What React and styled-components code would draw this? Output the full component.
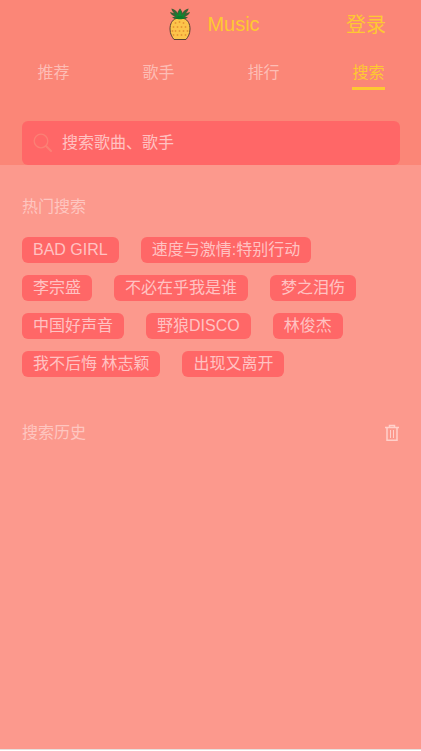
import React from 'react';
import styled, { createGlobalStyle } from 'styled-components';

const GlobalStyle = createGlobalStyle`
  *, *::before, *::after { box-sizing: border-box; }
  body {
    margin: 0;
    background: #fff;
    color: #fdc5c1;
    font: 16px/24px "Liberation Sans", "Noto Sans CJK SC", sans-serif;
  }
  button, input { font: inherit; color: inherit; border: 0; padding: 0; background: none; }
  button { cursor: pointer; }
  a { color: inherit; text-decoration: none; }
`;

const Page = styled.div`
  min-height: calc(100vh - 1px);
  display: flex;
  flex-direction: column;
  background: #fc998d;
  border-bottom: 1px solid #e6e0dd;
`;

const Top = styled.div`
  background: #fb8677;
`;

const Header = styled.header`
  display: grid;
  grid-template-columns: 1fr auto 1fr;
  align-items: center;
  height: 48px;
  padding: 0 35px 0 42px;
  color: #fec832;
  font-size: 20px;
`;

const Brand = styled.h1`
  grid-column: 2;
  display: flex;
  align-items: center;
  gap: 15px;
  margin: 0;
  font-size: inherit;
  font-weight: 400;
`;

const Login = styled.a`
  justify-self: end;
  padding-top: 2px;
`;

const Tabs = styled.nav`
  display: flex;
  height: 42px;
  margin-bottom: 31px;
  padding-left: 1px;
`;

const Tab = styled.a`
  flex: 1;
  display: flex;
  justify-content: center;
  color: ${({ $active }) => ($active ? '#fec832' : '#fdbdb5')};
`;

const TabLabel = styled.span`
  padding-top: 13px;
  border-bottom: 3px solid ${({ $active }) => ($active ? '#fec832' : 'transparent')};
`;

const SearchBox = styled.label`
  display: flex;
  align-items: center;
  gap: 10px;
  height: 44px;
  margin: 0 21px 0 22px;
  padding: 0 11px;
  border-radius: 6px;
  background: #ff6767;
`;

const SearchInput = styled.input`
  flex: 1;
  min-width: 0;
  height: 24px;
  outline: none;
  &::placeholder { color: #ffc2c2; opacity: 1; }
`;

const Section = styled.section`
  padding: 0 21px 0 22px;
  margin-top: ${({ $gap }) => $gap}px;
`;

const SectionHead = styled.div`
  display: flex;
  align-items: center;
  justify-content: space-between;
`;

const Title = styled.h2`
  margin: 0;
  font-size: 16px;
  font-weight: 400;
  color: #fec6c0;
`;

const ChipList = styled.ul`
  display: flex;
  flex-wrap: wrap;
  gap: 12px 22px;
  margin: 18px 0 0;
  padding: 0;
  list-style: none;
`;

const Chip = styled.button`
  display: block;
  height: 26px;
  padding: 0 11px;
  border-radius: 6px;
  background: #ff6767;
  color: #ffc2c2;
  line-height: 26px;
`;

const ClearButton = styled.button`
  display: flex;
`;

const seeds = [
  [7, 15], [11, 14], [15, 15],
  [5, 19], [9, 19], [13, 19], [17, 19],
  [4, 23], [7, 23], [11, 23], [15, 23], [19, 23],
  [5, 27], [9, 27], [13, 27], [17, 27],
];

const Pineapple = () => (
  <svg width="24" height="34" viewBox="0 0 24 34" aria-hidden="true">
    <path
      d="M12 13C8 13 6 11.500 4 10.500L7 9.500C4.500 8.500 2.500 7 2 5l4 1.200C4.500 4.500 3.500 3 3.500 1.500 6.500 2 8.500 4 9.500 6 10 4 11 2.500 12 1.500c1 1 2 2.500 2.500 4.500 1-2 3-4 6-4.500 0 1.500-1 3-2.500 4.700L22 5c-.5 2-2.500 3.500-5 4.500l3 1c-2 1-4 2.500-8 2.500Z"
      fill="#3f5f35"
    />
    <path
      d="M12 3c2 3 1.500 4 1.500 6L17 5c0 3-1 4-2 5.500L18 10c-1 1.500-3 2.500-6 2.500S7 11.500 6 10l3 .5C8 9 7 8 7 5l3.500 4c0-2-.5-3 1.500-6Z"
      fill="#0b8a30"
    />
    <path
      d="M8 11.500h8c4 1.500 6 5.500 6 10.500 0 5-2 8-4 10.500H6C4 30 2 27 2 22c0-5 2-9 6-10.500Z"
      fill="#fdc44a" stroke="#5b4032" strokeWidth="1"
    />
    <path d="M7.500 11.500c2 1 7 1 9 0L14 9h-4Z" fill="#0b7a2c" />
    {seeds.map(([x, y]) => (
      <path key={`${x}-${y}`} d={`M${x + 0.5} ${y}v2`} stroke="#ea9836" strokeWidth="1.500" />
    ))}
  </svg>
);

const SearchIcon = () => (
  <svg width="19" height="20" viewBox="0 0 19 20" fill="none" stroke="#fb8075" aria-hidden="true">
    <circle cx="8" cy="8" r="6.800" strokeWidth="1.300" />
    <path d="m13 13 5 5" strokeWidth="2" strokeLinecap="round" />
  </svg>
);

const TrashIcon = () => (
  <svg width="16" height="18" viewBox="0 0 16 18" fill="none" stroke="#ffd0ca" aria-hidden="true">
    <path d="M1 3.500h14M5.500 3V1.500h5V3" strokeWidth="1.500" />
    <path d="M3 4v12.300h10V4" strokeWidth="1.500" />
    <path d="M6.500 6v8M9.500 6v8" strokeWidth="1" />
  </svg>
);

const tabs = ['推荐', '歌手', '排行', '搜索'];
const hotKeys = [
  'BAD GIRL', '速度与激情:特别行动', '李宗盛', '不必在乎我是谁', '梦之泪伤',
  '中国好声音', '野狼DISCO', '林俊杰', '我不后悔 林志颖', '出现又离开',
];

export default function App() {
  return (
    <>
      <GlobalStyle />
      <Page>
        <Top>
          <Header>
            <Brand><Pineapple />Music</Brand>
            <Login href="#login">登录</Login>
          </Header>
          <Tabs>
            {tabs.map((name) => (
              <Tab key={name} href={`#${name}`} $active={name === '搜索'}>
                <TabLabel $active={name === '搜索'}>{name}</TabLabel>
              </Tab>
            ))}
          </Tabs>
          <SearchBox>
            <SearchIcon />
            <SearchInput type="text" placeholder="搜索歌曲、歌手" aria-label="搜索歌曲、歌手" />
          </SearchBox>
        </Top>
        <Section $gap={30}>
          <Title>热门搜索</Title>
          <ChipList>
            {hotKeys.map((key) => (
              <li key={key}><Chip type="button">{key}</Chip></li>
            ))}
          </ChipList>
        </Section>
        <Section $gap={44}>
          <SectionHead>
            <Title>搜索历史</Title>
            <ClearButton type="button" aria-label="清空搜索历史"><TrashIcon /></ClearButton>
          </SectionHead>
        </Section>
      </Page>
    </>
  );
}
